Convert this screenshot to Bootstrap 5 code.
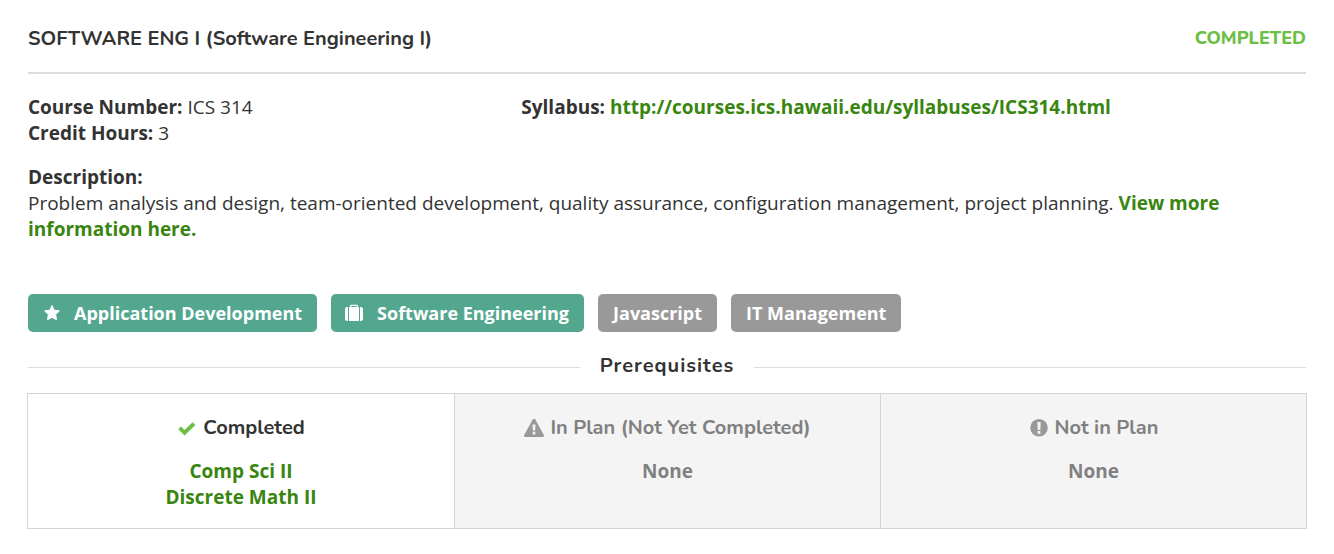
<!DOCTYPE html>
<html lang="en">
<head>
<meta charset="utf-8">
<meta name="viewport" content="width=device-width, initial-scale=1">
<title>Software Engineering I</title>
<link href="https://cdn.jsdelivr.net/npm/bootstrap@5.3.0/dist/css/bootstrap.min.css" rel="stylesheet">
<style>
  body { font-family: "Open Sans", "Liberation Sans", sans-serif; font-size: 19px; line-height: 26px; color: #333; background: #fff; }
  b { font-weight: 700; }
  a { color: #38850f; font-weight: 700; text-decoration: none; }
  a:hover { color: #2b680b; text-decoration: underline; }
  .course { padding: 26px 28px 24px; }
  .course-head { border-bottom: 2px solid #ddd; padding-bottom: 20px; margin-bottom: 20px; }
  .course-title, .status, .prereq-title, .col-title { font-family: "Nunito", "Lato", sans-serif; font-weight: 700; font-size: 20px; line-height: 26px; margin: 0; }
  .status { color: #6cbe45; font-size: 18px; font-weight: 800; line-height: 24px; }
  .facts { width: 38.6%; }
  .summary { margin-top: 18px; margin-bottom: 52px; }
  .tags { gap: 14px; }
  .tag { font-size: 18px; font-weight: 700; color: #fff; background: #999; border: 0; border-radius: 5px; padding: 6px 15px; }
  .tag-interest { background: #54a78f; }
  .tag svg { width: 20px; height: 20px; margin-right: 11px; }
  .prereq-title { margin-top: 21px; margin-bottom: 14px; gap: 20px; letter-spacing: 1px; }
  .prereq-title::before, .prereq-title::after { content: ""; flex: 1; border-top: 1px solid #ddd; margin-top: 2px; }
  .prereqs { border: 1px solid #d4d4d5; margin: 0 -1px; }
  .prereq-col { padding: 21px 14px 18px; text-align: center; }
  .prereq-col + .prereq-col { border-left: 1px solid #d4d4d5; }
  .prereq-col.empty-col { background: #f4f4f4; color: #808080; }
  .col-title { margin-bottom: 17px; }
  .col-title svg { height: 20px; width: 20px; margin-right: 6px; }
  .green { color: #6cbe45; }
</style>
</head>
<body>
<main class="course">
  <header class="course-head d-flex justify-content-between align-items-start">
    <h1 class="course-title">SOFTWARE ENG I (Software Engineering I)</h1>
    <span class="status">COMPLETED</span>
  </header>

  <div class="d-flex">
    <div class="facts">
      <div><b>Course Number:</b> ICS 314</div>
      <div><b>Credit Hours:</b> 3</div>
    </div>
    <div><b>Syllabus:</b> <a href="http://courses.ics.hawaii.edu/syllabuses/ICS314.html">http://courses.ics.hawaii.edu/syllabuses/ICS314.html</a></div>
  </div>

  <div class="summary">
    <b>Description:</b><br>
    Problem analysis and design, team-oriented development, quality assurance, configuration management, project planning. <a href="#">View more information here.</a>
  </div>

  <div class="d-flex flex-wrap tags">
    <button type="button" class="tag tag-interest d-flex align-items-center"><svg viewBox="0 0 20 20" fill="currentColor" stroke="currentColor" stroke-linejoin="round" aria-hidden="true"><path d="M9 2.500l2.200 4.700 5.200.7-3.800 3.700.9 5.200L9 14.300l-4.500 2.500.9-5.200L1.600 7.900l5.200-.7z"/></svg>Application Development</button>
    <button type="button" class="tag tag-interest d-flex align-items-center"><svg viewBox="1 0 20 20" overflow="visible" fill="currentColor" aria-hidden="true"><path d="M3 4v14h-.5A2.500 2.500 0 0 1 0 15.500v-9A2.500 2.500 0 0 1 2.500 4z"/><path fill-rule="evenodd" d="M4 4h1V3a1.300 1.300 0 0 1 1.300-1.300h5.400A1.300 1.300 0 0 1 13 3v1h1v14H4zM6.300 3v1h5.400V3z"/><path d="M15 4h.5A2.500 2.500 0 0 1 18 6.500v9a2.500 2.500 0 0 1-2.500 2.500H15z"/></svg>Software Engineering</button>
    <button type="button" class="tag">Javascript</button>
    <button type="button" class="tag">IT Management</button>
  </div>

  <h2 class="prereq-title d-flex align-items-center">Prerequisites</h2>

  <div class="prereqs row g-0">
    <section class="prereq-col col-4">
      <h3 class="col-title d-flex justify-content-center align-items-center"><svg class="green" viewBox="0 0 20 20" fill="currentColor" aria-hidden="true"><path d="M1.300 11.200L3.900 8.600 7.500 12 15.600 4.300 18.400 7 7.500 17.500z"/></svg>Completed</h3>
      <div><a href="#">Comp Sci II</a></div>
      <div><a href="#">Discrete Math II</a></div>
    </section>
    <section class="prereq-col empty-col col-4">
      <h3 class="col-title d-flex justify-content-center align-items-center"><svg viewBox="0 0 20 20" fill="#999" aria-hidden="true"><path fill-rule="evenodd" d="M10 .8q.9 0 1.300.8l8.500 15.500q.7 1.600-1 1.900H1.200q-1.700-.3-1-1.900L8.700 1.600Q9.100.8 10 .8zM8.500 6.500l.3 6h2.400l.3-6zM8.700 13.800v2.600h2.600v-2.600z"/></svg>In Plan (Not Yet Completed)</h3>
      <b>None</b>
    </section>
    <section class="prereq-col empty-col col-4">
      <h3 class="col-title d-flex justify-content-center align-items-center"><svg viewBox="0 0 20 20" fill="#999" aria-hidden="true"><path fill-rule="evenodd" d="M10 1a8.800 8.800 0 1 0 0 17.600A8.800 8.800 0 0 0 10 1zM8.300 4l.4 7.900h2.600l.4-7.900zM8.600 13.100v2.700h2.800v-2.700z"/></svg>Not in Plan</h3>
      <b>None</b>
    </section>
  </div>
</main>
<script src="https://cdn.jsdelivr.net/npm/bootstrap@5.3.0/dist/js/bootstrap.bundle.min.js"></script>
</body>
</html>
